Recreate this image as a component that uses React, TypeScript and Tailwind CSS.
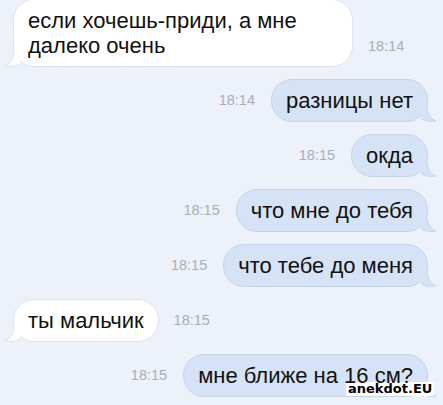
import React from "react";

type Msg = {
  id: number;
  side: "in" | "out";
  lines: string[];
  time: string;
};

const messages: Msg[] = [
  { id: 1, side: "in", lines: ["если хочешь-приди, а мне", "далеко очень"], time: "18:14" },
  { id: 2, side: "out", lines: ["разницы нет"], time: "18:14" },
  { id: 3, side: "out", lines: ["окда"], time: "18:15" },
  { id: 4, side: "out", lines: ["что мне до тебя"], time: "18:15" },
  { id: 5, side: "out", lines: ["что тебе до меня"], time: "18:15" },
  { id: 6, side: "in", lines: ["ты мальчик"], time: "18:15" },
  { id: 7, side: "out", lines: ["мне ближе на 16 см?"], time: "18:15" },
];

function Tail({ side }: { side: "in" | "out" }) {
  const fill = side === "in" ? "#ffffff" : "#d6e3f6";
  const stroke = side === "in" ? "#dde2ea" : "#c6d4ea";
  if (side === "out") {
    return (
      <svg className="absolute right-[-10px] bottom-[-1px]" width="16" height="16" viewBox="0 0 16 16">
        <path d="M0 0 L6 0 C6 8 10 13 15 15 C10 16 4 15 0 13 Z" fill={fill} />
        <path d="M6 0 C6 8 10 13 15 15 C10 16 4 15 0 13" fill="none" stroke={stroke} strokeWidth="1" />
      </svg>
    );
  }
  return (
    <svg className="absolute left-[-10px] bottom-[-1px]" width="16" height="16" viewBox="0 0 16 16">
      <path d="M16 0 L10 0 C10 8 6 13 1 15 C6 16 12 15 16 13 Z" fill={fill} />
      <path d="M10 0 C10 8 6 13 1 15 C6 16 12 15 16 13" fill="none" stroke={stroke} strokeWidth="1" />
    </svg>
  );
}

function Bubble({ msg }: { msg: Msg }) {
  const isIn = msg.side === "in";
  const wide = msg.lines.length > 1;
  return (
    <div
      className={`relative rounded-[21px] border px-[14px] py-[8px] text-[22px] leading-[25px] text-[#111111] ${
        isIn ? "bg-white border-[#dde2ea]" : "bg-[#d6e3f6] border-[#c6d4ea]"
      } ${wide ? "w-[340px]" : ""}`}
    >
      {msg.lines.map((l, i) => (
        <div key={i} className="relative z-10 whitespace-nowrap">
          {l}
        </div>
      ))}
      <Tail side={msg.side} />
    </div>
  );
}

function Time({ t, bottom }: { t: string; bottom?: boolean }) {
  return (
    <span className={`text-[14.5px] text-[#a7aeba] ${bottom ? "self-end mb-[9px]" : ""}`}>{t}</span>
  );
}

export default function App() {
  return (
    <div
      className="relative w-[443px] h-[405px] overflow-hidden bg-[#edf1f9]"
      style={{ fontFamily: '"Liberation Sans", Arial, sans-serif' }}
    >
      <div className="flex flex-col gap-[12px] -mt-[1px]">
        {messages.map((m) =>
          m.side === "in" ? (
            <div key={m.id} className="flex items-center gap-[15px] pl-[13px]">
              <Bubble msg={m} />
              <Time t={m.time} bottom={m.lines.length > 1} />
            </div>
          ) : (
            <div key={m.id} className="flex items-center justify-end gap-[16px] pr-[15px]">
              <Time t={m.time} />
              <Bubble msg={m} />
            </div>
          )
        )}
      </div>

      {/* watermark */}
      <div
        className="absolute left-[346px] top-[382px] bg-white px-[2px] text-[13px] leading-[14px] font-bold text-black"
        style={{ fontFamily: '"DejaVu Sans", Verdana, sans-serif' }}
      >
        anekdot.EU
      </div>
    </div>
  );
}
